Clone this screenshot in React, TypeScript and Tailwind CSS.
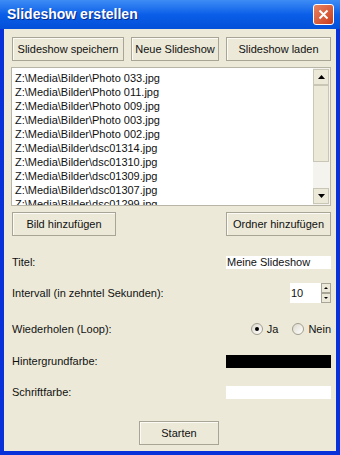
// Slideshow erstellen — Windows-XP-Dialog
import React from 'react';

const files = [
  'Z:\\Media\\Bilder\\Photo 033.jpg',
  'Z:\\Media\\Bilder\\Photo 011.jpg',
  'Z:\\Media\\Bilder\\Photo 009.jpg',
  'Z:\\Media\\Bilder\\Photo 003.jpg',
  'Z:\\Media\\Bilder\\Photo 002.jpg',
  'Z:\\Media\\Bilder\\dsc01314.jpg',
  'Z:\\Media\\Bilder\\dsc01310.jpg',
  'Z:\\Media\\Bilder\\dsc01309.jpg',
  'Z:\\Media\\Bilder\\dsc01307.jpg',
  'Z:\\Media\\Bilder\\dsc01299.jpg',
];

function Btn({ label, w }: { label: string; w: string }) {
  return (
    <button
      className={`${w} h-[24px] border border-[#a8a596] bg-[#ece9d8] text-[11px] text-[#111] flex items-center justify-center shadow-[inset_1px_1px_0_#fbfaf5]`}
    >
      {label}
    </button>
  );
}

function Arrow({ up }: { up?: boolean }) {
  return (
    <div className="h-[16px] w-[16px] bg-[#ece9d8] border border-[#c9c6b6] flex items-center justify-center">
      <svg width="7" height="4" viewBox="0 0 7 4">
        <path d={up ? 'M0 4 L3.5 0 L7 4 Z' : 'M0 0 L3.5 4 L7 0 Z'} fill="#000" />
      </svg>
    </div>
  );
}

function Row({ label, top, children }: { label: string; top: string; children?: React.ReactNode }) {
  return (
    <div className={`${top} flex items-center justify-between pl-[8px] pr-[5px] h-[20px]`}>
      <span className="text-[11px] text-[#111]">{label}</span>
      {children}
    </div>
  );
}

function Radio({ checked }: { checked?: boolean }) {
  return (
    <span className="w-[12px] h-[12px] rounded-full bg-gradient-to-br from-[#dcd9cc] to-white border border-[#a19e90] flex items-center justify-center">
      {checked && <span className="w-[4px] h-[4px] rounded-full bg-black" />}
    </span>
  );
}

export default function App() {
  return (
    <div className="w-[340px] h-[455px] bg-[#0831d9] flex flex-col" style={{ fontFamily: '"Liberation Sans", Arial, sans-serif' }}>
      {/* Titelleiste */}
      <div className="h-[29px] shrink-0 flex items-center justify-between pl-[7px] pr-[6px] bg-gradient-to-b from-[#3d8cf5] via-[#0a5ee8] to-[#0450d8]">
        <span className="text-white font-bold text-[14px] [text-shadow:1px_1px_0_#0a2a8a]">Slideshow erstellen</span>
        <div className="w-[21px] h-[21px] rounded-[3px] border border-white bg-gradient-to-br from-[#e9835f] to-[#c8391a] flex items-center justify-center">
          <svg width="11" height="11" viewBox="0 0 11 11">
            <path d="M1.5 1.5 L9.5 9.5 M9.5 1.5 L1.5 9.5" stroke="#fff" strokeWidth="2" />
          </svg>
        </div>
      </div>

      {/* Inhalt */}
      <div className="ml-[4px] mr-[4px] mb-[4px] flex-1 bg-[#ece9d8] flex flex-col">
        <div className="mt-[8px] flex justify-between pl-[8px] pr-[5px]">
          <Btn label="Slideshow speichern" w="w-[112px]" />
          <Btn label="Neue Slideshow" w="w-[88px]" />
          <Btn label="Slideshow laden" w="w-[105px]" />
        </div>

        {/* Dateiliste */}
        <div className="mt-[6px] ml-[7px] mr-[5px] h-[139px] border border-[#b8b5a6] bg-white flex">
          <div className="flex-1 overflow-hidden pl-[3px] pt-[3px]">
            {files.map((f) => (
              <div key={f} className="h-[14px] leading-[14px] text-[11px] text-[#111] whitespace-nowrap">
                {f}
              </div>
            ))}
          </div>
          <div className="w-[17px] bg-[#f4f3ee] flex flex-col py-[1px]">
            <Arrow up />
            <div className="h-[77px] w-[16px] bg-[#ece9d8] border border-[#c9c6b6]" />
            <div className="flex-1" />
            <Arrow />
          </div>
        </div>

        <div className="mt-[6px] flex justify-between pl-[8px] pr-[5px]">
          <Btn label="Bild hinzufügen" w="w-[104px]" />
          <Btn label="Ordner hinzufügen" w="w-[105px]" />
        </div>

        <Row label="Titel:" top="mt-[16px]">
          <div className="w-[105px] h-[13px] bg-white text-[11px] leading-[13px] pl-[1px] text-[#111]">Meine Slideshow</div>
        </Row>

        <Row label="Intervall (in zehntel Sekunden):" top="mt-[11px]">
          <div className="flex items-center h-[20px]">
            <div className="w-[31px] h-[20px] bg-white text-[11px] leading-[20px] pl-[1px] text-[#111]">10</div>
            <div className="w-[10px] h-[20px] flex flex-col">
              <div className="flex-1 border border-[#a8a596] bg-[#ece9d8] flex items-center justify-center">
                <svg width="4" height="2" viewBox="0 0 4 2"><path d="M0 2 L2 0 L4 2 Z" fill="#000" /></svg>
              </div>
              <div className="flex-1 border border-[#a8a596] bg-[#ece9d8] flex items-center justify-center">
                <svg width="4" height="2" viewBox="0 0 4 2"><path d="M0 0 L2 2 L4 0 Z" fill="#000" /></svg>
              </div>
            </div>
          </div>
        </Row>

        <Row label="Wiederholen (Loop):" top="mt-[16px]">
          <div className="flex items-center text-[11px] text-[#111]">
            <Radio checked />
            <span className="ml-[4px]">Ja</span>
            <span className="ml-[14px]"><Radio /></span>
            <span className="ml-[4px]">Nein</span>
          </div>
        </Row>

        <Row label="Hintergrundfarbe:" top="mt-[12px]">
          <div className="w-[105px] h-[13px] bg-black" />
        </Row>

        <Row label="Schriftfarbe:" top="mt-[11px]">
          <div className="w-[105px] h-[13px] bg-white" />
        </Row>

        <div className="mt-[19px] flex pl-[135px]">
          <Btn label="Starten" w="w-[80px]" />
        </div>
      </div>
    </div>
  );
}
